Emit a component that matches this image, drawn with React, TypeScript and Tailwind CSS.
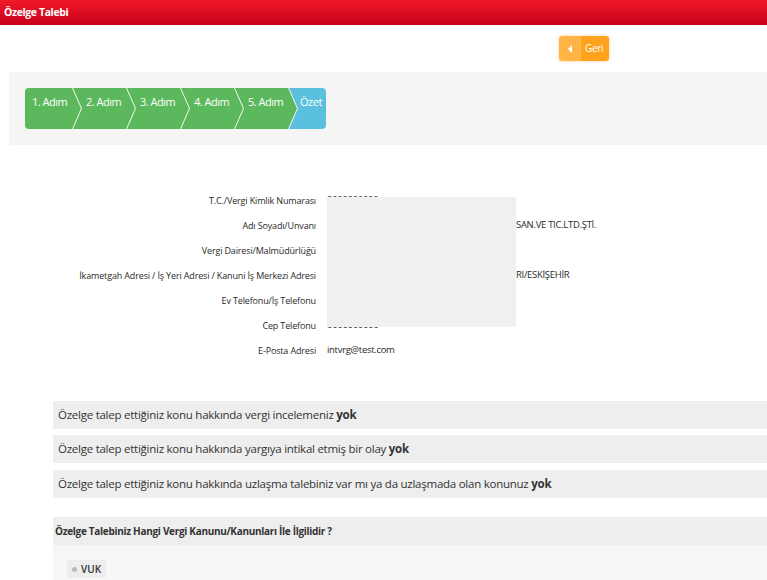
import React from "react";

const steps = ["1. Adım", "2. Adım", "3. Adım", "4. Adım", "5. Adım"];

const rows: [string, string, string][] = [
  ["T.C./Vergi Kimlik Numarası", "0000000000", ""],
  ["Adı Soyadı/Unvanı", "", "SAN.VE TIC.LTD.ŞTİ."],
  ["Vergi Dairesi/Malmüdürlüğü", "", ""],
  ["İkametgah Adresi / İş Yeri Adresi / Kanuni İş Merkezi Adresi", "", "RI/ESKİŞEHİR"],
  ["Ev Telefonu/İş Telefonu", "", ""],
  ["Cep Telefonu", "0000000000", ""],
  ["E-Posta Adresi", "intvrg@test.com", ""],
];

export default function App() {
  return (
    <div className="w-[767px] h-[580px] overflow-hidden bg-white text-[#333]" style={{ fontFamily: "'Open Sans', sans-serif" }}>
      <div className="h-[25px] bg-gradient-to-b from-[#f01828] to-[#c8001a] flex items-center pl-[4px]">
        <span className="text-white text-[10.5px] font-bold tracking-[-0.4px]">Özelge Talebi</span>
      </div>
      <div className="flex justify-start pl-[559px] pt-[11px]">
        <div className="flex h-[25px] w-[50px] rounded-[3px] overflow-hidden shadow-[0_0_3px_rgba(255,160,40,0.5)]">
          <div className="w-[22px] bg-[#ffb545] flex items-center justify-center">
            <svg width="6" height="8" viewBox="0 0 6 8"><path d="M5 0 L1 4 L5 8 Z" fill="#fff" /></svg>
          </div>
          <div className="flex-1 bg-[#ffa21d] flex items-center text-white text-[10px] pl-[4px] tracking-[-0.3px]">Geri</div>
        </div>
      </div>
      <div className="mt-[11px] ml-[9px] h-[73px] bg-[#f5f5f5] pl-[16px] pt-[16px]">
        <div className="flex h-[41px] text-white text-[11px] tracking-[-0.5px]">
          {steps.map((s, i) => (
            <div
              key={s}
              className={i === 0 ? "w-[56px] h-full bg-[#5cb85c] rounded-l-[4px] pl-[7px] pt-[6px]" : "w-[62px] h-full bg-[#5cb85c] -ml-[8px] pl-[13px] pt-[6px]"}
              style={{
                clipPath:
                  i === 0
                    ? "polygon(0 0, 47px 0, 56px 50%, 47px 100%, 0 100%)"
                    : "polygon(0 0, 53px 0, 62px 50%, 53px 100%, 0 100%, 9px 50%)",
              }}
            >
              {s}
            </div>
          ))}
          <div
            className="w-[37px] h-full bg-[#5bc0de] -ml-[8px] pl-[11px] pt-[6px] rounded-r-[4px]"
            style={{ clipPath: "polygon(0 0, 100% 0, 100% 100%, 0 100%, 9px 50%)" }}
          >
            Özet
          </div>
        </div>
      </div>
      <div className="relative mt-[43px]">
        {rows.map(([l, v, tail]) => (
          <div key={l} className="flex h-[25px] items-center text-[9px] tracking-[-0.15px] text-[#2a2a2a]">
            <div className="w-[316px] text-right whitespace-nowrap">{l}</div>
            <div className="pl-[11px] whitespace-nowrap flex text-[9.5px] tracking-[-0.3px]">
              {tail ? (
                <>
                  <span className="inline-block w-[189px]" />
                  <span>{tail}</span>
                </>
              ) : (
                <span>{v}</span>
              )}
            </div>
          </div>
        ))}
        <div className="absolute left-[327px] top-[9px] w-[189px] h-[130px] bg-[#f0f0f0]" />
      </div>
      <div className="mt-[38px] ml-[53px] flex flex-col gap-[6px] text-[11.5px] tracking-[-0.25px]">
        <div className="h-[28px] bg-[#eeeeee] flex items-center pl-[5px]">
          <span>Özelge talep ettiğiniz konu hakkında vergi incelemeniz <b>yok</b></span>
        </div>
        <div className="h-[28px] bg-[#eeeeee] flex items-center pl-[5px]">
          <span>Özelge talep ettiğiniz konu hakkında yargıya intikal etmiş bir olay <b>yok</b></span>
        </div>
        <div className="h-[28px] bg-[#eeeeee] flex items-center pl-[5px] mt-[1px]">
          <span>Özelge talep ettiğiniz konu hakkında uzlaşma talebiniz var mı ya da uzlaşmada olan konunuz <b>yok</b></span>
        </div>
      </div>
      <div className="mt-[19px] ml-[53px]">
        <div className="h-[28px] bg-[#eeeeee] flex items-center pl-[2px] text-[10px] font-bold tracking-[-0.3px]">
          Özelge Talebiniz Hangi Vergi Kanunu/Kanunları İle İlgilidir ?
        </div>
        <div className="h-[60px] bg-[#f7f7f7] pl-[14px] pt-[15px] flex items-start">
          <div className="flex items-center h-[18px] bg-[#eeeeee] px-[5px] text-[10px] font-semibold gap-[4px]">
            <span className="w-[5px] h-[5px] rounded-full bg-[#bbb]" />
            <span>VUK</span>
          </div>
        </div>
      </div>
    </div>
  );
}
